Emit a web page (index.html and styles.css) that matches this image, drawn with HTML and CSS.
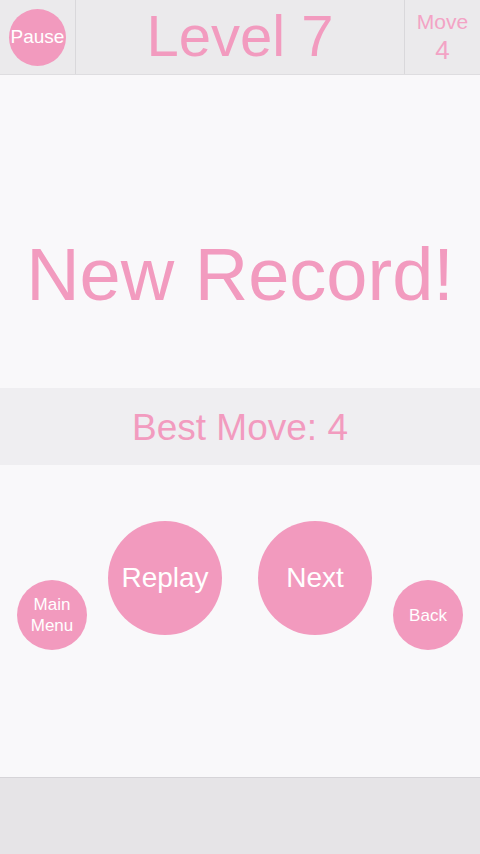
FILE: index.html
```html
<!DOCTYPE html>
<html>
<head>
<meta charset="utf-8">
<link rel="stylesheet" href="styles.css">
</head>
<body>
<div class="screen">
  <header class="topbar">
    <div class="cell cell-pause"><div class="btn btn-pause">Pause</div></div>
    <div class="cell cell-title">Level 7</div>
    <div class="cell cell-move"><span class="move-label">Move</span><span class="move-num">4</span></div>
  </header>
  <section class="record"><h1 class="record-text">New Record!</h1></section>
  <section class="best">Best Move: 4</section>
  <section class="actions">
    <div class="btn btn-small">Main<br>Menu</div>
    <div class="btn btn-big">Replay</div>
    <div class="btn btn-big btn-next">Next</div>
    <div class="btn btn-small">Back</div>
  </section>
  <footer class="bottombar"></footer>
</div>
</body>
</html>
```

FILE: styles.css
```css
html, body {
  margin: 0;
  padding: 0;
}
body {
  width: 480px;
  height: 854px;
  overflow: hidden;
  font-family: "Liberation Sans", Arial, sans-serif;
  background: #f9f8fa;
}
.screen {
  display: flex;
  flex-direction: column;
  height: 854px;
}
.topbar {
  display: grid;
  grid-template-columns: 75px 1fr 75px;
  height: 74px;
  border-bottom: 1px solid #dedde0;
  background: #ebeaec;
  flex: none;
}
.cell {
  display: flex;
  align-items: center;
  justify-content: center;
}
.cell-title {
  border-left: 1px solid #d9d8db;
  border-right: 1px solid #d9d8db;
  color: #f29bbf;
  font-size: 58px;
  line-height: 1;
  align-items: flex-start;
  padding-top: 7px;
}
.cell-move {
  flex-direction: column;
  justify-content: flex-start;
  color: #f3a3c5;
  padding-top: 10px;
}
.move-label {
  font-size: 21px;
  line-height: 24px;
}
.move-num {
  font-size: 26px;
  line-height: 32px;
}
.btn {
  display: flex;
  align-items: center;
  justify-content: center;
  text-align: center;
  border-radius: 50%;
  background: #f29abe;
  color: #ffffff;
  flex: none;
}
.btn-pause {
  width: 57px;
  height: 57px;
  font-size: 19px;
}
.record {
  height: 313px;
  box-sizing: border-box;
  padding-top: 163px;
  flex: none;
}
.record-text {
  margin: 0;
  font-weight: normal;
  text-align: center;
  font-size: 74px;
  line-height: 1;
  color: #f29bbf;
}
.best {
  height: 77px;
  box-sizing: border-box;
  padding-top: 21px;
  background: #efeef1;
  text-align: center;
  color: #f29bbf;
  font-size: 37px;
  line-height: 1;
  flex: none;
}
.actions {
  height: 312px;
  box-sizing: border-box;
  padding-top: 56px;
  display: flex;
  justify-content: center;
  align-items: flex-start;
  gap: 21px;
  flex: none;
}
.btn-big {
  width: 114px;
  height: 114px;
  font-size: 28px;
}
.btn-next {
  margin-left: 15px;
}
.btn-small {
  width: 70px;
  height: 70px;
  margin-top: 59px;
  font-size: 17px;
  line-height: 21px;
}
.bottombar {
  flex: 1;
  border-top: 1px solid #d6d4d8;
  background: #e6e4e7;
}
```
